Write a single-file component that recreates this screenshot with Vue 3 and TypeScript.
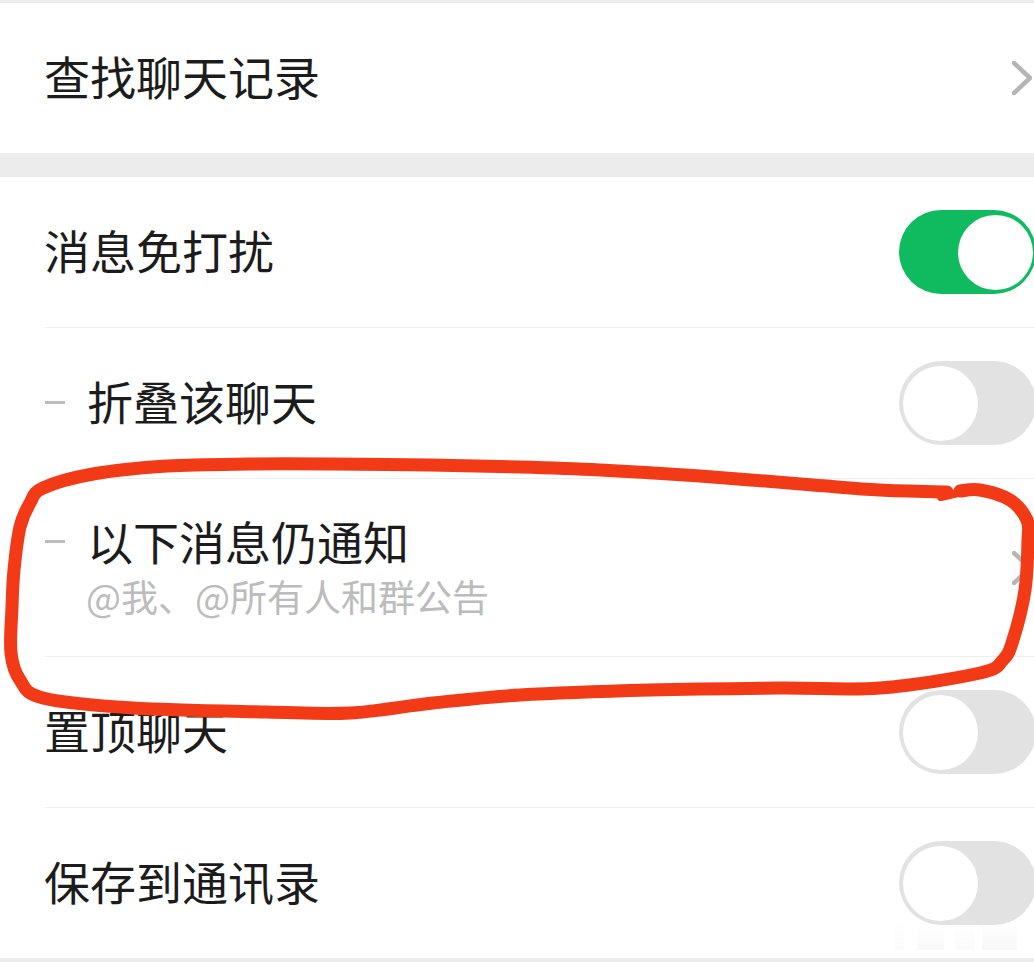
<script setup lang="ts">
type Point = [number, number]

const rows = [
  { label: '消息免打扰', on: true },
  { label: '折叠该聊天', on: false, sub: true },
  { label: '以下消息仍通知', note: '@我、@所有人和群公告', sub: true, tall: true },
  { label: '置顶聊天', on: false },
  { label: '保存到通讯录', on: false },
]

// hand-drawn loop, traced off the reference
const loop: Point[] = [
  [947, 492], [880, 490], [813, 485], [700, 476], [600, 470], [520, 467], [430, 465], [333, 464],
  [250, 464], [167, 466], [93, 474], [43, 488], [30, 503], [20, 527], [14, 570], [12, 607],
  [11, 653], [20, 680], [43, 698], [133, 708], [267, 712], [350, 713], [433, 703], [520, 695],
  [650, 690], [780, 688], [880, 688], [980, 673], [1003, 660], [1013, 640], [1025, 590],
  [1028, 540], [1027, 520], [1010, 500], [980, 490], [960, 491],
]

function smooth(points: Point[]) {
  let d = `M${points[0][0]} ${points[0][1]}`
  for (let i = 0; i < points.length - 1; i++) {
    const p0 = points[Math.max(i - 1, 0)]
    const p1 = points[i]
    const p2 = points[i + 1]
    const p3 = points[Math.min(i + 2, points.length - 1)]
    const c1x = p1[0] + (p2[0] - p0[0]) / 6
    const c1y = p1[1] + (p2[1] - p0[1]) / 6
    const c2x = p2[0] - (p3[0] - p1[0]) / 6
    const c2y = p2[1] - (p3[1] - p1[1]) / 6
    d += ` C${c1x} ${c1y} ${c2x} ${c2y} ${p2[0]} ${p2[1]}`
  }
  return d
}

const loopPath = smooth(loop)
</script>

<template>
  <main class="page">
    <section class="group first">
      <div class="row">
        <div class="text">
          <span class="label">查找聊天记录</span>
        </div>
        <svg class="chevron" viewBox="0 0 20 34" aria-hidden="true"><path d="M2 2 L18 17 L2 32" /></svg>
      </div>
    </section>

    <section class="group">
      <div v-for="row in rows" :key="row.label" class="row" :class="{ tall: row.tall }">
        <i v-if="row.sub" class="dash"></i>
        <div class="text" :class="{ indented: row.sub }">
          <span class="label">{{ row.label }}</span>
          <span v-if="row.note" class="note">{{ row.note }}</span>
        </div>
        <svg v-if="row.tall" class="chevron" viewBox="0 0 20 34" aria-hidden="true"><path d="M2 2 L18 17 L2 32" /></svg>
        <span v-else class="toggle" :class="{ on: row.on }"><b></b></span>
      </div>
    </section>

    <svg class="ink" viewBox="0 0 1034 962" aria-hidden="true">
      <path :d="loopPath" />
      <path class="blob" d="M941 497 L958 493" />
    </svg>
    <div class="smudge"></div>
  </main>
</template>

<style>
html,
body {
  background: #ececec;
}
</style>

<style scoped>
.page {
  position: relative;
  width: 1034px;
  height: 962px;
  overflow: hidden;
  padding-top: 3px;
  box-sizing: border-box;
  background: #ececec;
  font-family: "Noto Sans CJK SC", sans-serif;
}

.group {
  background: #fff;
  padding-left: 45px;
}

.first {
  margin-bottom: 24px;
}

.row {
  display: flex;
  align-items: center;
  height: 150px;
  border-bottom: 1px solid #eeeeee;
  box-sizing: content-box;
}

.row:last-child {
  border-bottom: 0;
}

.tall {
  height: 177px;
}

.label {
  font-size: 46px;
  line-height: 60px;
  color: #1c1c1c;
  white-space: nowrap;
}

.text {
  display: flex;
  flex-direction: column;
  gap: 2px;
  margin-top: -6px;
  margin-left: -1px;
}

.indented {
  margin-left: 22px;
}

.dash {
  width: 20px;
  height: 3px;
  background: #bdbdbd;
  margin-top: -2px;
}

.tall .dash {
  margin-top: -52px;
}

.note {
  font-size: 37px;
  line-height: 48px;
  margin-left: -1px;
  color: #bcbcbc;
  white-space: nowrap;
}

.chevron {
  width: 20px;
  height: 34px;
  margin-left: auto;
  margin-right: 2px;
  fill: none;
  stroke: #b5b5b5;
  stroke-width: 4.5;
  stroke-linecap: round;
  stroke-linejoin: round;
}

.toggle {
  display: flex;
  align-items: center;
  width: 137px;
  height: 84px;
  margin-left: auto;
  margin-right: -2px;
  padding: 4px;
  box-sizing: border-box;
  border-radius: 42px;
  background: #e2e2e2;
  flex-shrink: 0;
}

.toggle b {
  width: 75px;
  height: 75px;
  border-radius: 50%;
  background: #fff;
}

.toggle.on {
  background: #10bb60;
  justify-content: flex-end;
  padding-right: 3px;
}

.ink {
  position: absolute;
  inset: 0;
  width: 1034px;
  height: 962px;
  fill: none;
  stroke: #f33a17;
  stroke-width: 13;
  stroke-linecap: round;
  stroke-linejoin: round;
}

.blob {
  stroke-width: 8;
}

/* faint watermark streaks under the last toggle */
.smudge {
  position: absolute;
  left: 888px;
  top: 920px;
  width: 134px;
  height: 30px;
  opacity: 0.3;
  background:
    linear-gradient(90deg, transparent 0 5%, #eee 5% 12%, transparent 12% 22%, #e8e8e8 22% 42%, transparent 42% 50%, #eee 50% 64%, transparent 64% 70%, #e6e6e6 70% 96%, transparent 96%);
  -webkit-mask-image: linear-gradient(180deg, transparent, #000);
  mask-image: linear-gradient(180deg, transparent, #000);
}
</style>
